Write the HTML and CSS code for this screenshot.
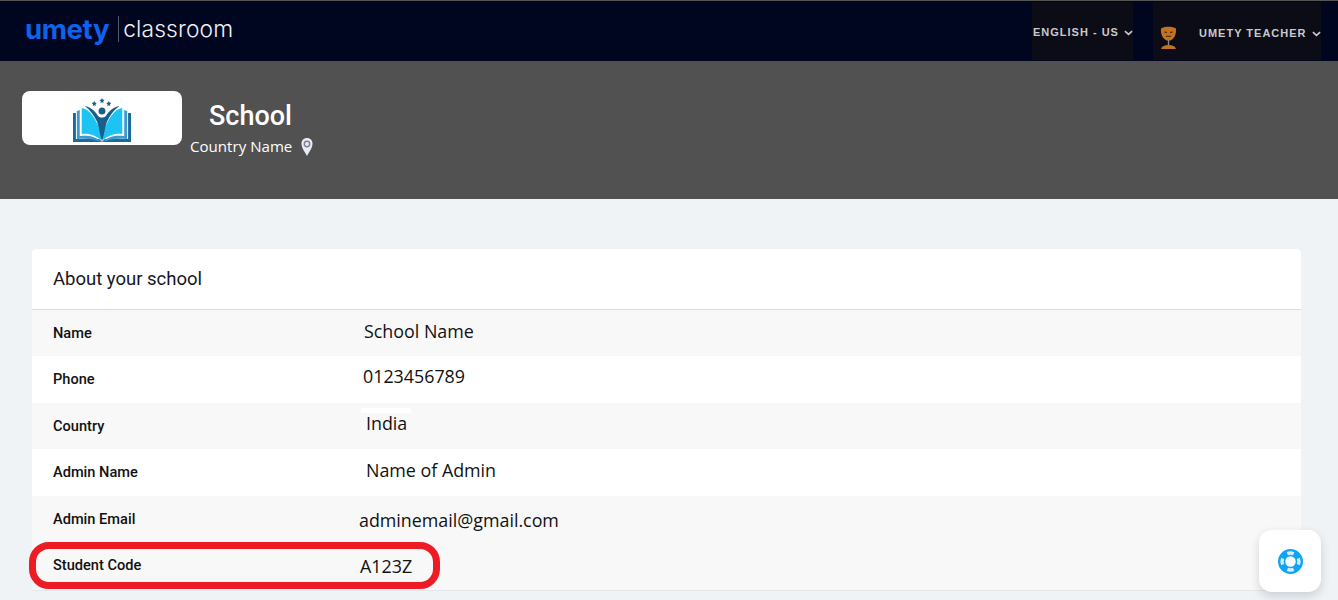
FILE: index.html
```html
<!DOCTYPE html>
<html lang="en">
<head>
<meta charset="utf-8">
<title>School</title>
<link rel="stylesheet" href="styles.css">
</head>
<body>
<header class="nav">
  <div class="brand">
    <span class="brand-main">umety</span>
    <span class="brand-sep"></span>
    <span class="brand-sub">classroom</span>
  </div>
  <div class="nav-right">
    <div class="nav-item nav-lang">
      <span>ENGLISH - US</span>
      <svg class="chev" viewBox="0 0 10 6"><path d="M1 1l4 3.600L9 1" fill="none" stroke="#c9c9cc" stroke-width="1.800"/></svg>
    </div>
    <div class="nav-item nav-user">
      <svg class="avatar" viewBox="0 0 17 23">
        <path d="M1 2.500C4 .3 13 .3 16 2.500c.6 5-1.500 10-5.500 12h-4C2.500 12.500.4 7.500 1 2.500z" fill="#c4721f"/>
        <path d="M4.500 6l2.500.6M12.500 6l-2.500.6M6 10.300h5" stroke="#5a3208" stroke-width="1.300" fill="none"/>
        <path d="M7.800 14h1.400v5H7.800z" fill="#8a8a8a"/>
        <path d="M1 23c1-3 3.500-4 7.500-4s6.500 1 7.500 4z" fill="#c4721f"/>
      </svg>
      <span class="user-name">UMETY TEACHER</span>
      <svg class="chev" viewBox="0 0 10 6"><path d="M1 1l4 3.600L9 1" fill="none" stroke="#c9c9cc" stroke-width="1.800"/></svg>
    </div>
  </div>
</header>

<section class="hero">
  <div class="logo-box">
    <svg class="book" viewBox="0 0 60 46" preserveAspectRatio="none">
      <path d="M0 16h3v26h24l3 3H0z" fill="#1a6a9c"/>
      <path d="M60 16h-3v26H33l-3 3h30z" fill="#1a6a9c"/>
      <path d="M4 14l3-1v26c9-1 16 0 22 6-6-3-16-4-25-3z" fill="#3e9ad0"/>
      <path d="M56 14l-3-1v26c-9-1-16 0-22 6 6-3 16-4 25-3z" fill="#3e9ad0"/>
      <path d="M9 11c8 1 15 10 20 26v6c-5-4-12-7-20-6z" fill="#1cc4f4"/>
      <path d="M51 11c-8 1-15 10-20 26v6c5-4 12-7 20-6z" fill="#1cc4f4"/>
      <path d="M12 9c6 1 11 5 14 10 2 2 6 2 8 0 3-5 8-9 14-10-6 4-10 10-13 16-2 6-3 13-5 20-2-7-3-14-5-20-3-6-7-12-13-16z" fill="#195f8c"/>
      <circle cx="30" cy="14" r="3.600" fill="#195f8c"/>
      <path d="M30 1l.8 1.600 1.800.3-1.300 1.300.3 1.800-1.600-.8-1.600.8.300-1.800-1.300-1.300 1.800-.3zM22 4l.8 1.600 1.800.3-1.300 1.300.3 1.800-1.600-.8-1.600.8.300-1.800-1.300-1.300 1.800-.3zM37 4l.8 1.600 1.800.3-1.300 1.300.3 1.800-1.600-.8-1.600.8.300-1.800-1.300-1.300 1.800-.3z" fill="#195f8c"/>
    </svg>
  </div>
  <div class="hero-text">
    <h1 class="hero-title">School</h1>
    <div class="hero-country">
      <span>Country Name</span>
      <svg class="pin" viewBox="0 0 12 18">
        <path d="M6 0C2.700 0 .5 2.400.5 5.800.5 10 4 14 6 18c2-4 5.500-8 5.500-12.200C11.500 2.400 9.300 0 6 0z" fill="#e6edf7"/>
        <circle cx="6" cy="6" r="2.700" fill="none" stroke="#8a7f92" stroke-width="1.500"/>
      </svg>
    </div>
  </div>
</section>

<main class="content">
  <section class="card">
    <h2 class="card-title">About your school</h2>
    <div class="row row-a">
      <div class="label">Name</div><div class="value v-name">School Name</div>
    </div>
    <div class="row row-b">
      <div class="label">Phone</div><div class="value v-phone">0123456789</div>
    </div>
    <div class="row row-c">
      <div class="label">Country</div><div class="value v-country">India</div>
    </div>
    <div class="row row-d">
      <div class="label">Admin Name</div><div class="value v-admin">Name of Admin</div>
    </div>
    <div class="row row-e">
      <div class="label">Admin Email</div><div class="value v-email">adminemail@gmail.com</div>
    </div>
    <div class="row row-f">
      <div class="label">Student Code</div><div class="value v-code">A123Z</div>
      <span class="highlight"></span>
    </div>
  </section>
</main>

<button class="help" type="button" aria-label="Help">
  <svg class="help-icon" viewBox="0 0 24 24">
    <circle cx="12" cy="12" r="12" fill="#0ea5f5"/>
    <circle cx="12" cy="12" r="5" fill="#fff"/>
    <path d="M8.300 3a9.800 9.800 0 0 1 7.400 0l-1.300 3a6.600 6.600 0 0 0-4.800 0zM8.300 21a9.800 9.800 0 0 0 7.400 0l-1.300-3a6.600 6.600 0 0 1-4.800 0zM3 8.300a9.800 9.800 0 0 0 0 7.400l3-1.300a6.600 6.600 0 0 1 0-4.800zM21 8.300a9.800 9.800 0 0 1 0 7.400l-3-1.300a6.600 6.600 0 0 0 0-4.800z" fill="#d4eefd"/>
  </svg>
</button>
</body>
</html>
```
FILE: styles.css
```css
* { box-sizing: border-box; }
html, body { height: 100%; }
body {
  margin: 0;
  background: #eff3f6;
  font-family: "Roboto", "Liberation Sans", sans-serif;
  color: #111;
  overflow: hidden;
}
.nav {
  height: 61px;
  background: #000520;
  border-top: 1px solid #555;
  display: flex;
  align-items: center;
  justify-content: space-between;
  padding: 0 17px 0 25px;
}
.brand { display: flex; align-items: center; margin-top: -5px; }
.brand-main {
  font-family: "Inter", sans-serif;
  font-weight: 700;
  font-size: 27.6px;
  letter-spacing: -0.4px;
  color: #0f62ea;
}
.brand-sep {
  width: 1px;
  height: 26px;
  background: #555a68;
  margin: 0 4px 0 9px;
}
.brand-sub {
  font-family: "Inter", sans-serif;
  font-weight: 300;
  font-size: 22.8px;
  letter-spacing: 0.15px;
  color: #eef0f4;
}
.nav-right { display: flex; gap: 20px; height: 58px; }
.nav-item {
  background: #0b0c15;
  display: flex;
  align-items: center;
  color: #c9c9cc;
  font-family: "Liberation Sans", sans-serif;
  font-size: 11px;
  font-weight: 700;
  letter-spacing: 1px;
}
.nav-lang { width: 101px; padding: 2px 0 0 1px; }
.nav-user { width: 168px; padding: 4px 0 0 7px; }
.chev { width: 9px; height: 6px; margin-left: 5px; margin-top: 1px; }
.avatar { width: 17px; height: 23px; margin-top: 8px; }
.user-name { margin-left: 22px; }
.hero {
  height: 138px;
  background: #515151;
  display: flex;
  align-items: flex-start;
  padding: 30px 0 0 22px;
}
.logo-box {
  width: 160px;
  height: 54px;
  background: #fff;
  border-radius: 8px;
  display: flex;
  justify-content: center;
  align-items: center;
}
.book { width: 58px; height: 46px; margin-top: 4px; margin-left: -1px; }
.hero-text {
  margin-left: 8px;
  color: #fff;
  display: flex;
  flex-direction: column;
  align-items: flex-start;
}
.hero-title {
  margin: 8px 0 0 19px;
  font-size: 27px;
  line-height: 34px;
  font-weight: 500;
}
.hero-country {
  display: flex;
  align-items: center;
  font-family: "Open Sans", sans-serif;
  font-size: 15.1px;
  line-height: 22px;
  margin-top: 2px;
}
.pin { width: 12px; height: 18px; margin-left: 9px; margin-top: 1px; }
.content { padding: 50px 37px 0 32px; }
.card {
  background: #fff;
  border-radius: 5px 5px 0 0;
}
.card-title {
  margin: 0;
  height: 61px;
  padding: 19px 0 0 21px;
  font-size: 18.5px;
  line-height: 22px;
  font-weight: 400;
  color: #16161f;
  border-bottom: 1px solid #dcdcdc;
}
.row {
  position: relative;
  display: flex;
  align-items: center;
  padding-left: 21px;
}
.row-a { height: 46px; background: #f8f8f8; }
.row-b { height: 47px; background: #fff; }
.row-c { height: 46px; background: #f8f8f8; }
.row-d { height: 47px; background: #fff; }
.row-e { height: 46px; background: #f8f8f8; }
.row-f { height: 49px; background: #f8f8f8; border-bottom: 1px solid #e4e6ea; }
.label {
  width: 292px;
  flex: none;
  font-size: 14.6px;
  font-weight: 500;
  color: #111;
}
.value {
  font-family: "Open Sans", sans-serif;
  font-size: 17.85px;
  line-height: 24px;
  color: #111;
}
.v-name { margin-left: 19px; margin-top: -5px; }
.v-phone { margin-left: 18px; margin-top: -7px; }
.v-country { margin-left: 21px; margin-top: -6px; position: relative; }
.v-country::before {
  content: "";
  position: absolute;
  left: -5px;
  top: -3px;
  width: 50px;
  height: 5px;
  background: #fff;
}
.v-admin { margin-left: 21px; margin-top: -5px; }
.v-email { margin-left: 14px; margin-top: 1px; }
.v-code { margin-left: 15px; margin-top: 0; }
.row-b .label { margin-top: -1px; }
.row-d .label { margin-top: -1px; }
.row-e .label { margin-top: -1px; }
.row-f .label { margin-top: -3px; }
.highlight {
  position: absolute;
  left: -3px;
  top: 0;
  width: 411px;
  height: 47px;
  border: 7px solid #ed1c24;
  border-radius: 20px;
}
.help {
  position: fixed;
  left: 1259px;
  top: 530px;
  width: 62px;
  height: 62px;
  border: 0;
  border-radius: 13px;
  background: #fff;
  box-shadow: 0 4px 10px rgba(40, 50, 70, 0.18);
  display: flex;
  align-items: center;
  justify-content: center;
  padding: 0;
}
.help-icon { width: 25px; height: 25px; }
```
